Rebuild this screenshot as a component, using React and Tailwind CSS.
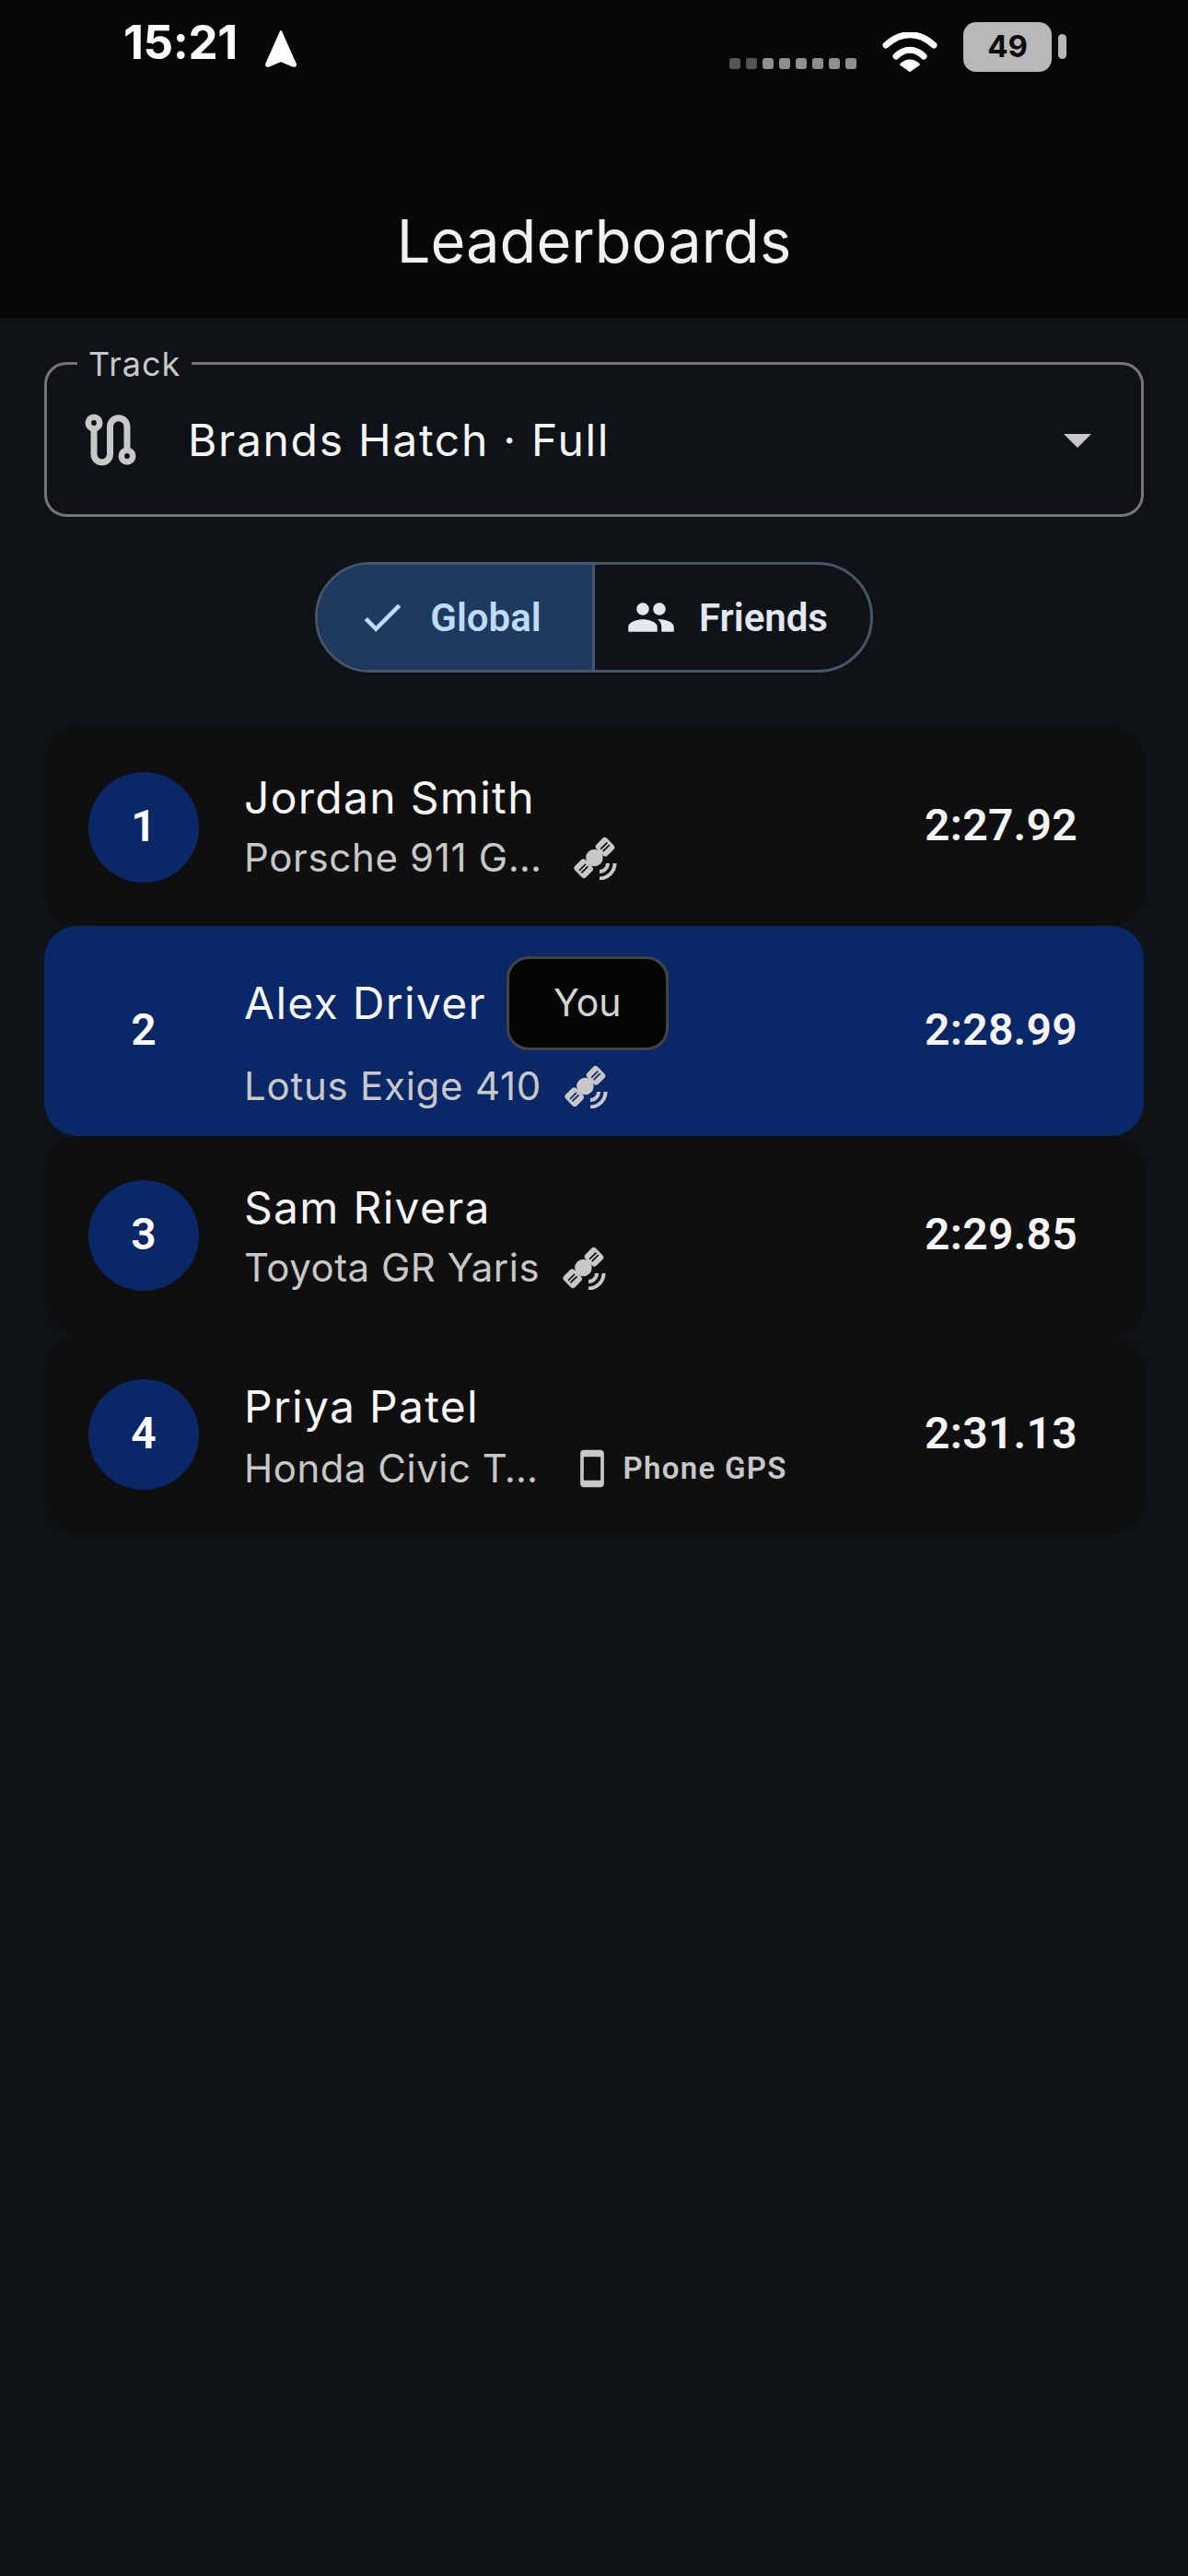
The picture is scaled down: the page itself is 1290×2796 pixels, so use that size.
import React from "react";
import { MdCheck, MdPeople, MdArrowDropDown, MdSmartphone } from "react-icons/md";

const rows = [
  { n: 1, name: "Jordan Smith", car: "Porsche 911 G…", time: "2:27.92", h: "h-[215px]", gps: "sat", gap: "ml-[33px]", col: "pb-[2px]", carText: "tracking-[0.65px]" },
  { n: 2, name: "Alex Driver", car: "Lotus Exige 410", time: "2:28.99", h: "h-[228px]", gps: "sat", gap: "ml-[24px]", col: "pt-[8px]", carGap: "mt-[9px]", carText: "tracking-[0.75px]", me: true },
  { n: 3, name: "Sam Rivera", car: "Toyota GR Yaris", time: "2:29.85", h: "h-[216px]", gps: "sat", gap: "ml-[24px]", col: "pt-[2px]", carText: "tracking-[0.5px]" },
  { n: 4, name: "Priya Patel", car: "Honda Civic T…", time: "2:31.13", h: "h-[216px]", gps: "phone", col: "pt-[4px]", carGap: "mt-[4px]", carText: "tracking-[0.5px]" },
];

function RouteIcon() {
  return (
    <svg width="72" height="72" viewBox="0 0 72 72" className="shrink-0">
      <path d="M19 18 V52 A8.75 8.75 0 0 0 36.5 52 V22 A9.25 9.25 0 0 1 55 22 V54" fill="none" stroke="#c8c8c8" strokeWidth="7" />
      <circle cx="19" cy="18" r="6.2" fill="#0f1318" stroke="#c8c8c8" strokeWidth="6.6" />
      <circle cx="55" cy="54" r="6.2" fill="#0f1318" stroke="#c8c8c8" strokeWidth="6.6" />
    </svg>
  );
}

function SatIcon({ className, slit }) {
  const panel = (cx, cy) => (
    <g transform={`rotate(-45 ${cx} ${cy})`}>
      <rect x={cx - 8} y={cy - 8.5} width="16" height="17" rx="3.5" fill="#c8c8c8" />
      <rect x={cx - 5} y={cy - 2.6} width="10" height="1.7" fill={slit} />
      <rect x={cx - 5} y={cy + 0.9} width="10" height="1.7" fill={slit} />
    </g>
  );
  return (
    <svg width="48" height="48" viewBox="0 0 48 48" className={"shrink-0 " + className}>
      {panel(11.7, 35.7)}
      {panel(35, 12.3)}
      <circle cx="23.4" cy="24" r="9.3" fill="#c8c8c8" />
      <path d="M38 30 A9 9 0 0 1 29 39" fill="none" stroke="#c8c8c8" strokeWidth="4" />
      <path d="M45.5 30 A16.5 16.5 0 0 1 29 46.5" fill="none" stroke="#c8c8c8" strokeWidth="4" />
    </svg>
  );
}

function StatusBar() {
  const dots = ["bg-[#555]", "bg-[#555]", "bg-[#8e8e8e]", "bg-[#8e8e8e]", "bg-[#8e8e8e]", "bg-[#8e8e8e]", "bg-[#8e8e8e]", "bg-[#8e8e8e]"];
  return (
    <div className="flex h-[80px] items-start justify-between pl-[134px] pr-[132px] pt-[24px] text-white">
      <div className="flex items-start gap-[29px]">
        <span className="text-[51px] font-bold leading-[44px] tracking-[-0.4px]">15:21</span>
        <svg width="36" height="42" viewBox="0 0 36 42" className="mt-[8px]">
          <path d="M18 2 L34 38 Q34 40.5 31 39.5 L18 34 L5 39.5 Q2 40.5 2 38 Z" fill="#fff" stroke="#fff" strokeWidth="2" strokeLinejoin="round" />
        </svg>
      </div>
      <div className="flex items-start">
        <div className="mt-[39px] mr-[28px] flex gap-[6px]">
          {dots.map((d, i) => <span key={i} className={"h-[12px] w-[12px] rounded-[3px] " + d} />)}
        </div>
        <svg width="60" height="44" viewBox="0 0 60 44" className="mt-[11px] mr-[28px]">
          <path d="M4 14 C20 -1 40 -1 56 14" fill="none" stroke="#fff" strokeWidth="7" strokeLinecap="round" />
          <path d="M15 26 C24 17 36 17 45 26" fill="none" stroke="#fff" strokeWidth="7" strokeLinecap="round" />
          <path d="M30 42 L20 35 C26 29 34 29 40 35 Z" fill="#fff" strokeLinejoin="round" stroke="#fff" strokeWidth="2" />
        </svg>
        <div className="flex h-[54px] w-[96px] items-center justify-center rounded-[14px] bg-[#b8b8b8] text-[33px] font-bold text-[#0a0a0a]">49</div>
        <span className="ml-[7px] mt-[13px] h-[27px] w-[9px] rounded-full bg-[#b8b8b8]" />
      </div>
    </div>
  );
}

function Row({ r }) {
  const circle = r.me ? "" : "bg-[#0a2768]";
  return (
    <div className={"flex items-center rounded-[36px] px-[48px] " + r.h + " " + (r.me ? "bg-[#0a2768]" : "bg-[#0f0f0f]")}>
      <div className={"flex h-[120px] w-[120px] shrink-0 items-center justify-center rounded-full pb-[2px] font-['Roboto',sans-serif] text-[48px] font-semibold text-white " + circle}>{r.n}</div>
      <div className={"ml-[49px] flex min-w-0 flex-1 flex-col " + r.col}>
        <div className="flex items-center">
          <span className="text-[48px] leading-[66px] tracking-[1.3px] text-[#f5f5f5]">{r.name}</span>
          {r.me && (
            <span className="ml-[22px] flex h-[102px] w-[176px] items-center justify-center rounded-[24px] border-[3px] border-[#444] bg-[#050505] text-[41px] text-[#d4d4d4]">You</span>
          )}
        </div>
        <div className={"flex items-center " + (r.carGap || "mt-[2px]")}>
          <span className={"text-[42px] leading-[60px] text-[#c8c8c8] " + r.carText}>{r.car}</span>
          {r.gps === "sat" ? (
            <SatIcon className={r.gap} slit={r.me ? "#0a2768" : "#0f0f0f"} />
          ) : (
            <span className="ml-[36px] flex items-center gap-[12px]">
              <MdSmartphone className="text-[#c8c8c8]" size={44} />
              <span className="font-['Roboto',sans-serif] text-[33px] font-semibold tracking-[1.3px] text-[#c8c8c8]">Phone GPS</span>
            </span>
          )}
        </div>
      </div>
      <div className="pb-[3px] pr-[24px] font-['Roboto',sans-serif] text-[48px] font-semibold tracking-[0.3px] text-[#f5f5f5]">{r.time}</div>
    </div>
  );
}

export default function App() {
  return (
    <div className="min-h-[2796px] w-[1290px] bg-[#0f1318] font-['Inter',sans-serif]">
      <header className="h-[345px] bg-[#070707]">
        <StatusBar />
        <div className="flex h-[265px] items-start justify-center pt-[136px] text-[65px] leading-[92px] text-[#f1f1f1]">Leaderboards</div>
      </header>
      <main className="px-[48px] pt-[48px]">
        <div className="relative flex h-[168px] items-center rounded-[24px] border-[3px] border-[#767676] pl-[32px] pr-[33px]">
          <span className="absolute left-[33px] top-[-25px] bg-[#0f1318] px-[12px] text-[36px] leading-[48px] tracking-[1px] text-[#c8c8c8]">Track</span>
          <RouteIcon />
          <span className="ml-[49px] flex-1 pt-[2px] text-[48px] tracking-[1.7px] text-[#f5f5f5]">Brands Hatch · Full</span>
          <MdArrowDropDown size={72} className="text-[#c8c8c8]" />
        </div>
        <div className="mt-[49px] flex justify-center">
          <div className="flex h-[120px] w-[606px] overflow-hidden rounded-full border-[3px] border-[#475569] font-['Roboto',sans-serif]">
            <div className="flex w-[301px] items-center justify-center gap-[25px] border-r-[3px] border-[#475569] bg-[#1e3a5f] pr-[12px] text-[42px] font-semibold text-[#bfdbfe]">
              <MdCheck size={54} />
              <span>Global</span>
            </div>
            <div className="flex flex-1 items-center justify-center gap-[25px] pr-[12px] text-[42px] font-semibold text-[#e2e8f0]">
              <MdPeople size={54} />
              <span>Friends</span>
            </div>
          </div>
        </div>
        <div className="mt-[60px] flex flex-col">
          {rows.map((r) => <Row key={r.n} r={r} />)}
        </div>
      </main>
    </div>
  );
}
